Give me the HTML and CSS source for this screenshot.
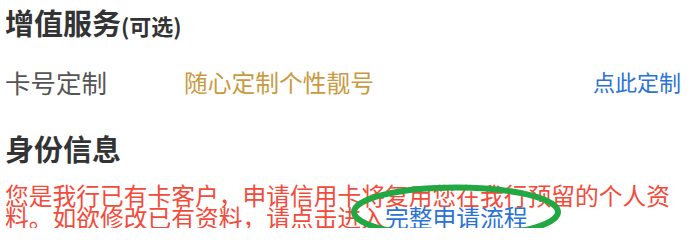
FILE: index.html
```html
<!DOCTYPE html>
<html lang="zh-CN">
<head>
    <meta charset="UTF-8">
    <meta name="viewport" content="width=device-width, initial-scale=1.0">
    <title>增值服务</title>
    <link rel="stylesheet" href="styles.css">
</head>
<body>
    <div class="page">
        <h2 class="section-title">增值服务<span class="optional">(可选)</span></h2>
        <div class="row">
            <span class="label">卡号定制</span>
            <span class="value">随心定制个性靓号</span>
            <a class="action" href="#">点此定制</a>
        </div>
        <h2 class="section-title identity">身份信息</h2>
        <p class="notice">您是我行已有卡客户，申请信用卡将复用您在我行预留的个人资料。如欲修改已有资料，请点击进入<a class="link" href="#">完整申请流程<svg class="circle" width="212" height="56" viewBox="0 0 212 56"><ellipse cx="106" cy="28" rx="102" ry="24.5" fill="none" stroke="#22a843" stroke-width="6"/></svg></a></p>
    </div>
</body>
</html>
```

FILE: styles.css
```css
body {
    margin: 0;
    background-color: #fff;
    font-family: "Noto Sans CJK SC", "Noto Sans", sans-serif;
}

.page {
    padding: 0 9px 0 5px;
}

.section-title {
    margin: 0;
    font-size: 29px;
    font-weight: bold;
    color: #333;
    line-height: 44px;
}

.optional {
    font-size: 22px;
}

.row {
    display: flex;
    align-items: center;
    height: 52px;
    margin-top: 8px;
}

.label {
    width: 179px;
    font-size: 25.5px;
    color: #555;
}

.value {
    flex: 1;
    font-size: 23.75px;
    color: #c99a40;
}

.action {
    font-size: 22px;
    color: #2a72d6;
    text-decoration: none;
}

.identity {
    margin-top: 19px;
}

.notice {
    margin: 14px 0 0;
    font-size: 23.75px;
    line-height: 22px;
    color: #f44a3a;
}

.link {
    position: relative;
    color: #2a72d6;
    text-decoration: none;
}

.circle {
    position: absolute;
    left: -35px;
    top: -15px;
}
```
